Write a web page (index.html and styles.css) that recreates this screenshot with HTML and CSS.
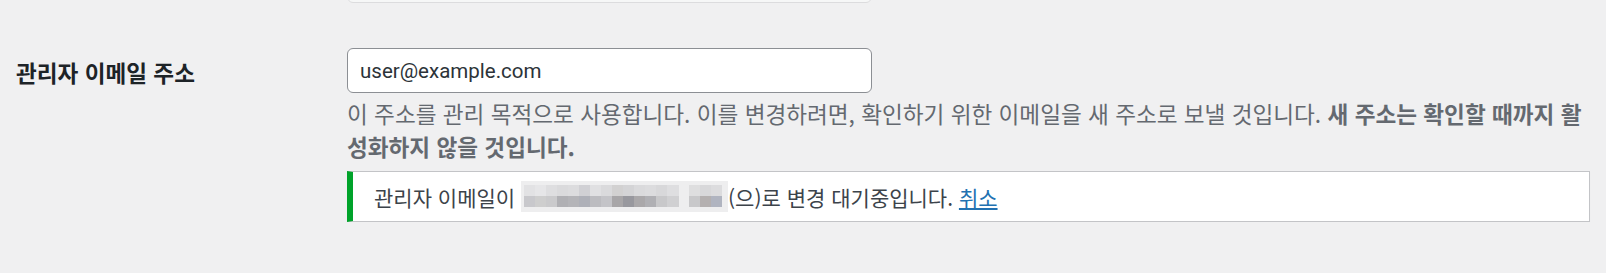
FILE: index.html
```html
<!DOCTYPE html>
<html lang="ko">

<head>
    <meta charset="UTF-8">
    <title>일반 설정</title>
    <link rel="stylesheet" href="styles.css">
</head>

<body>

    <div class="form-table">
        <!-- 이전 행 (사이트 주소) - 위쪽이 잘려 있음 -->
        <div class="row row-prev">
            <div class="label-cell"></div>
            <div class="field-cell">
                <div class="input-ghost"></div>
            </div>
        </div>

        <div class="row">
            <div class="label-cell">
                <label for="new_admin_email">관리자 이메일 주소</label>
            </div>
            <div class="field-cell">
                <input type="email" id="new_admin_email" class="regular-text" value="user@example.com">
                <p class="description">이 주소를 관리 목적으로 사용합니다. 이를 변경하려면, 확인하기 위한 이메일을 새 주소로 보낼 것입니다. <strong>새 주소는 확인할 때까지 활성화하지 않을 것입니다.</strong></p>
                <div class="notice">
                    <p>관리자 이메일이 <span class="redacted"><span class="mosaic mosaic-a"></span><span class="mosaic mosaic-b"></span></span>(으)로 변경 대기중입니다. <a href="#">취소</a></p>
                </div>
            </div>
        </div>
    </div>

</body>

</html>
```

FILE: styles.css
```css
/* 기본 */
body {
    margin: 0;
    padding: 0;
    background-color: #f0f0f1;
    color: #3c434a;
    font-family: "Noto Sans CJK KR", sans-serif;
    font-size: 21px;
}

.form-table {
    display: flex;
    flex-direction: column;
}

.row {
    display: flex;
    padding: 0 16px;
}

.label-cell {
    width: 331px;
    flex-shrink: 0;
}

.field-cell {
    flex: 1;
}

/* 잘린 이전 입력칸 */
.row-prev {
    height: 3px;
}

.input-ghost {
    width: 525px;
    height: 45px;
    margin-top: -42px;
    box-sizing: border-box;
    background-color: #f6f7f7;
    border: 1px solid #dcdcde;
    border-radius: 6px;
}

/* 라벨 */
.label-cell label {
    display: block;
    margin-top: 56px;
    color: #1d2327;
    font-size: 22.6px;
    font-weight: 700;
    line-height: 27px;
}

/* 입력칸 */
.regular-text {
    display: block;
    width: 525px;
    height: 45px;
    margin: 45px 0 0;
    padding: 0 12px;
    box-sizing: border-box;
    border: 1px solid #8c8f94;
    border-radius: 6px;
    background-color: #fff;
    color: #2c3338;
    font-family: Roboto, "Noto Sans CJK KR", sans-serif;
    font-size: 20.5px;
}

.description {
    margin: 5px 0 0;
    padding-right: 8px;
    color: #646970;
    font-size: 22.6px;
    line-height: 32.5px;
}

.description strong {
    font-weight: 700;
}

/* 알림 */
.notice {
    margin-top: 8px;
    background-color: #fff;
    border: 1px solid #c3c4c7;
    border-left: 6px solid #00a32a;
    box-shadow: 0 1px 1px rgba(0, 0, 0, 0.04);
}

.notice p {
    margin: 0;
    padding: 0 21px;
    height: 49px;
    display: flex;
    align-items: center;
    white-space: pre;
}

.notice a {
    color: #2271b1;
    text-decoration: underline;
}

/* 가려진 이메일 */
.redacted {
    display: inline-flex;
    gap: 10px;
    width: 207px;
    height: 31px;
    padding: 4px 3px 0;
    box-sizing: border-box;
    background-color: #eeeeef;
}

.mosaic {
    height: 22px;
    background-repeat: no-repeat;
    background-size: 100% 50%;
    background-position: top, bottom;
}

.mosaic-a {
    width: 155px;
    background-image:
        linear-gradient(to right,
            #e2e2e4 0 11px, #e6e6e8 11px 22px, #dedee0 22px 33px, #dadadc 33px 44px,
            #dcdcde 44px 55px, #d0d0d4 55px 66px, #e0e0e2 66px 77px, #dadadc 77px 88px,
            #d2d1d1 88px 99px, #d4d4d6 99px 110px, #dadadc 110px 121px, #dcdcde 121px 132px,
            #d8d8da 132px 143px, #dedee0 143px 155px),
        linear-gradient(to right,
            #c8c8cc 0 11px, #cecece 11px 22px, #cacacc 22px 33px, #b0b0b4 33px 44px,
            #b4b4b8 44px 55px, #aeb0b8 55px 66px, #bcbcc0 66px 77px, #c4c4c8 77px 88px,
            #a8a6a8 88px 99px, #98989e 99px 110px, #aaa8aa 110px 121px, #b0b0b4 121px 132px,
            #c8c8ca 132px 143px, #d0d0d2 143px 155px);
}

.mosaic-b {
    width: 33px;
    background-image:
        linear-gradient(to right, #dededf 0 11px, #d8d8da 11px 22px, #dcdcde 22px 33px),
        linear-gradient(to right, #c8c8ca 0 11px, #b4b0b0 11px 22px, #b0b4c0 22px 33px);
}
```
